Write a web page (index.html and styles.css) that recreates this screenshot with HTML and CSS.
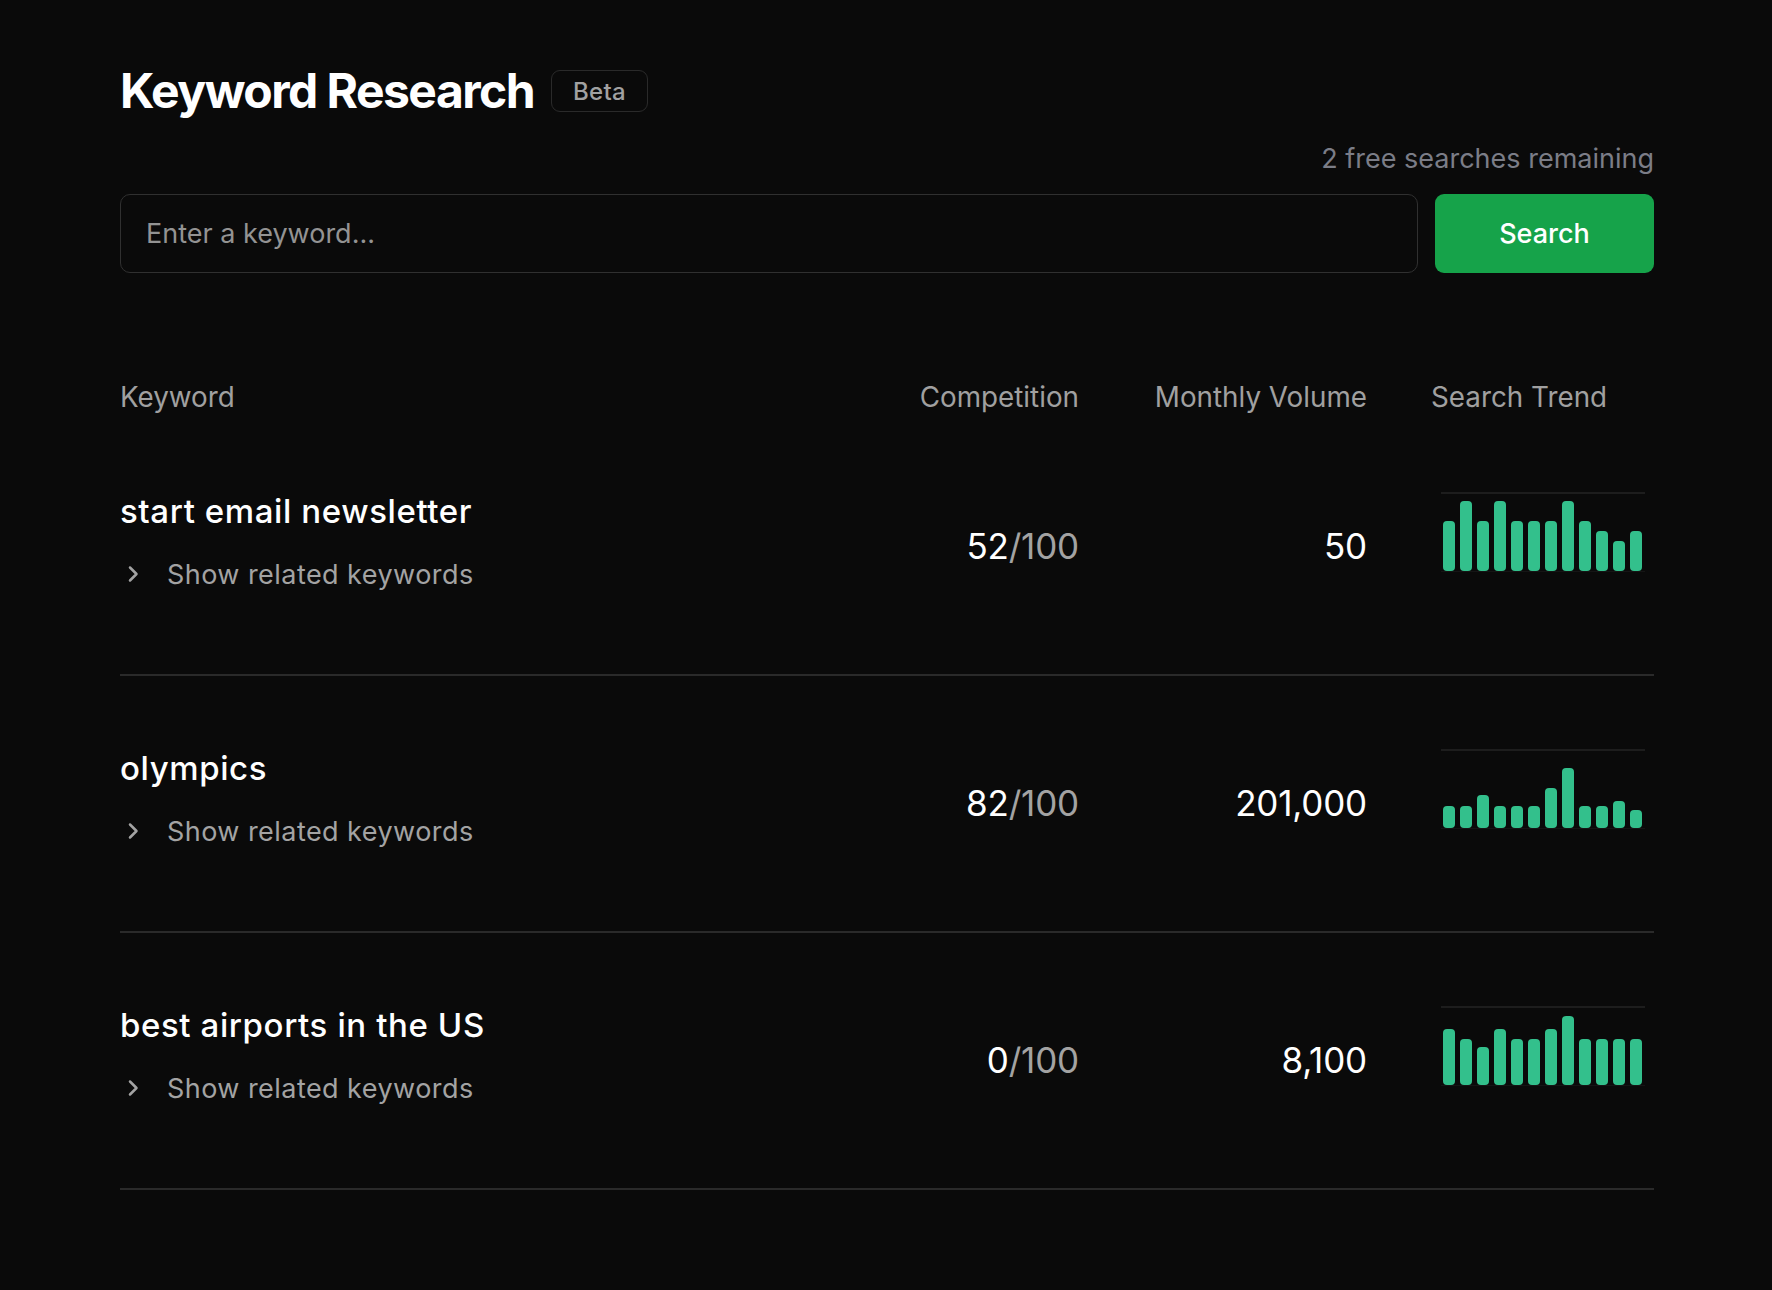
FILE: index.html
```html
<!DOCTYPE html>
<html lang="en">
<head>
<meta charset="utf-8">
<title>Keyword Research</title>
<link rel="stylesheet" href="styles.css">
</head>
<body>
<main class="page">
  <header class="title-row">
    <h1 class="title">Keyword Research</h1>
    <span class="badge">Beta</span>
  </header>
  <div class="remaining">2 free searches remaining</div>
  <form class="search" onsubmit="return false">
    <input class="search-input" type="text" placeholder="Enter a keyword...">
    <button class="search-btn" type="submit">Search</button>
  </form>

  <section class="table">
    <div class="grid thead">
      <div class="th">Keyword</div>
      <div class="th right">Competition</div>
      <div class="th right">Monthly Volume</div>
      <div class="th">Search Trend</div>
    </div>

    <div class="grid row">
      <div class="kw">
        <div class="kw-title">start email newsletter</div>
        <div class="related">
          <svg class="chev" width="14" height="18" viewBox="0 0 14 18"><path d="M4 2.5 L10.5 9 L4 15.5" fill="none" stroke="#a3a3a3" stroke-width="2.5" stroke-linecap="round" stroke-linejoin="round"/></svg>
          <span>Show related keywords</span>
        </div>
      </div>
      <div class="val right">52<span class="dim">/100</span></div>
      <div class="val right">50</div>
      <div class="trend">
        <div class="chart">
          <i class="bar" style="height:50px"></i><i class="bar" style="height:70px"></i><i class="bar" style="height:50px"></i><i class="bar" style="height:70px"></i><i class="bar" style="height:50px"></i><i class="bar" style="height:50px"></i><i class="bar" style="height:50px"></i><i class="bar" style="height:70px"></i><i class="bar" style="height:50px"></i><i class="bar" style="height:40px"></i><i class="bar" style="height:30px"></i><i class="bar" style="height:40px"></i>
        </div>
      </div>
    </div>

    <div class="grid row">
      <div class="kw">
        <div class="kw-title">olympics</div>
        <div class="related">
          <svg class="chev" width="14" height="18" viewBox="0 0 14 18"><path d="M4 2.5 L10.5 9 L4 15.5" fill="none" stroke="#a3a3a3" stroke-width="2.5" stroke-linecap="round" stroke-linejoin="round"/></svg>
          <span>Show related keywords</span>
        </div>
      </div>
      <div class="val right">82<span class="dim">/100</span></div>
      <div class="val right">201,000</div>
      <div class="trend">
        <div class="chart">
          <i class="bar" style="height:22px"></i><i class="bar" style="height:22px"></i><i class="bar" style="height:33px"></i><i class="bar" style="height:22px"></i><i class="bar" style="height:22px"></i><i class="bar" style="height:22px"></i><i class="bar" style="height:40px"></i><i class="bar" style="height:60px"></i><i class="bar" style="height:22px"></i><i class="bar" style="height:22px"></i><i class="bar" style="height:27px"></i><i class="bar" style="height:18px"></i>
        </div>
      </div>
    </div>

    <div class="grid row">
      <div class="kw">
        <div class="kw-title">best airports in the US</div>
        <div class="related">
          <svg class="chev" width="14" height="18" viewBox="0 0 14 18"><path d="M4 2.5 L10.5 9 L4 15.5" fill="none" stroke="#a3a3a3" stroke-width="2.5" stroke-linecap="round" stroke-linejoin="round"/></svg>
          <span>Show related keywords</span>
        </div>
      </div>
      <div class="val right">0<span class="dim">/100</span></div>
      <div class="val right">8,100</div>
      <div class="trend">
        <div class="chart">
          <i class="bar" style="height:56px"></i><i class="bar" style="height:46px"></i><i class="bar" style="height:38px"></i><i class="bar" style="height:56px"></i><i class="bar" style="height:46px"></i><i class="bar" style="height:46px"></i><i class="bar" style="height:56px"></i><i class="bar" style="height:69px"></i><i class="bar" style="height:46px"></i><i class="bar" style="height:46px"></i><i class="bar" style="height:46px"></i><i class="bar" style="height:46px"></i>
        </div>
      </div>
    </div>
  </section>
</main>
</body>
</html>
```

FILE: styles.css
```css
* { box-sizing: border-box; }

html, body {
  margin: 0;
  background: #0a0a0a;
}

body {
  font-family: Inter, "Noto Sans", "Liberation Sans", sans-serif;
  color: #fafafa;
  min-height: 100vh;
}

.page {
  padding: 62px 118px 0 120px;
}

.title-row {
  display: flex;
  align-items: center;
  gap: 17px;
  height: 58px;
}

.title {
  margin: 0;
  font-size: 48px;
  line-height: 58px;
  font-weight: 700;
  letter-spacing: -0.032em;
  color: #ffffff;
}

.badge {
  display: inline-flex;
  align-items: center;
  height: 42px;
  padding: 0 21px;
  border: 1.5px solid #2a2a2a;
  border-radius: 9px;
  font-size: 24px;
  font-weight: 500;
  color: #a1a1a1;
  letter-spacing: 0.01em;
}

.remaining {
  margin-top: 23px;
  text-align: right;
  font-size: 27px;
  line-height: 32px;
  color: #7b7d87;
}

.search {
  display: flex;
  gap: 17px;
  margin: 19px 0 0;
  height: 79px;
}

.search-input {
  flex: 1;
  height: 100%;
  background: transparent;
  border: 1.5px solid #303030;
  border-radius: 10px;
  padding: 0 25px;
  font-family: inherit;
  font-size: 27px;
  color: #fafafa;
  outline: none;
}

.search-input::placeholder {
  color: #939393;
}

.search-btn {
  width: 219px;
  height: 100%;
  background: #16a34a;
  border: none;
  border-radius: 9px;
  font-family: inherit;
  font-size: 27px;
  font-weight: 500;
  color: #ffffff;
  cursor: pointer;
}

.table {
  margin-top: 104px;
}

.grid {
  display: grid;
  grid-template-columns: 695px 200px 224px 223px;
  column-gap: 64px;
  align-items: center;
}

.thead {
  margin-bottom: 2px;
}

.th {
  font-size: 27.8px;
  line-height: 40px;
  color: #a0a0a0;
}

.right {
  text-align: right;
}

.row {
  padding: 70px 0 80px;
  border-bottom: 2px solid #2a2a2a;
}

.kw-title {
  font-size: 33px;
  line-height: 44px;
  font-weight: 500;
  letter-spacing: 0.6px;
  color: #ffffff;
}

.related {
  display: flex;
  align-items: center;
  margin-top: 21px;
  height: 40px;
  font-size: 27px;
  letter-spacing: 0.45px;
  color: #a3a3a3;
}

.chev {
  margin-left: 6px;
  margin-right: 27px;
  flex: none;
}

.val {
  padding-top: 8px;
  font-size: 35px;
  line-height: 44px;
  letter-spacing: -0.005em;
  color: #ffffff;
}

.dim {
  color: #a3a3a3;
}

.trend {
  display: flex;
  justify-content: center;
}

.chart {
  width: 204px;
  height: 80px;
  margin-bottom: 19px;
  padding: 0 2px;
  border-top: 2px solid #1d1d1d;
  border-bottom: 1px solid #151515;
  display: flex;
  align-items: flex-end;
  gap: 5px;
}

.bar {
  display: block;
  width: 12px;
  background: #33c08c;
  border-radius: 4px;
}
```
